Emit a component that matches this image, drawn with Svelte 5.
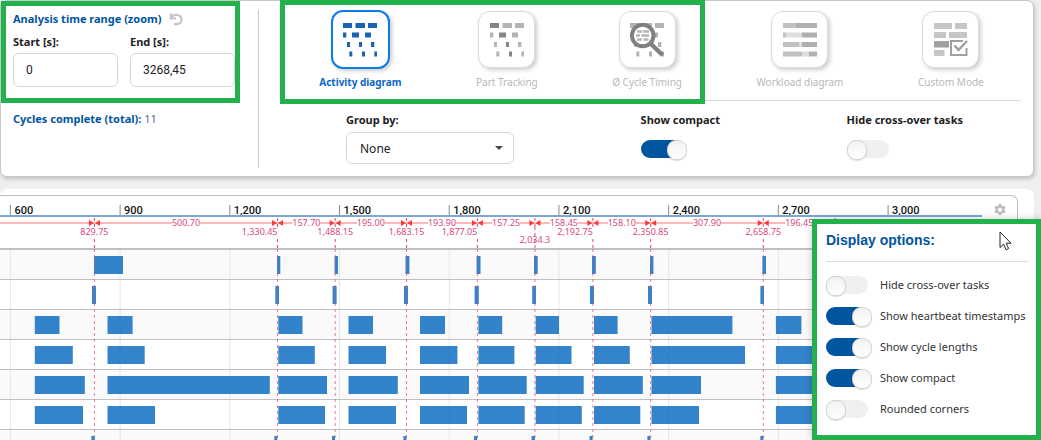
<script>
  let start = $state('0');
  let end = $state('3268,45');
  let mode = $state('activity');
  let compact = $state(true);
  let hideCross = $state(false);

  const modes = [
    { id: 'activity', label: 'Activity diagram' },
    { id: 'parts', label: 'Part Tracking' },
    { id: 'timing', label: 'Ø Cycle Timing' },
    { id: 'workload', label: 'Workload diagram' },
    { id: 'custom', label: 'Custom Mode' }
  ];

  // x, y, width of each dash in the activity icon
  const dashes = [
    [0, 0, 9], [12.5, 0, 9.5], [25, 0, 9],
    [0, 9.5, 3.3], [9, 9.5, 7], [22, 9.5, 6],
    [4, 19, 3], [16, 19, 3], [28, 19, 3.3],
    [6.3, 28.5, 3], [19, 28.5, 3], [31.3, 28.5, 2.7]
  ];
  const tracked = [0, 4, 7, 10];

  let options = $state([
    { label: 'Hide cross-over tasks', on: false },
    { label: 'Show heartbeat timestamps', on: true },
    { label: 'Show cycle lengths', on: true },
    { label: 'Show compact', on: true },
    { label: 'Rounded corners', on: false }
  ]);

  const toX = (t) => 10.4 + (t - 600) * 0.3657;
  const ticks = [600, 900, 1200, 1500, 1800, 2100, 2400, 2700, 3000];
  const beats = [
    { t: 829.75, text: '829.75', anchor: 'middle' },
    { t: 1330.45, text: '1,330.45', anchor: 'end' },
    { t: 1488.15, text: '1,488.15', anchor: 'middle' },
    { t: 1683.15, text: '1,683.15', anchor: 'middle' },
    { t: 1877.05, text: '1,877.05', anchor: 'end' },
    { t: 2034.3, text: '2,034.3', anchor: 'middle', low: true },
    { t: 2192.75, text: '2,192.75', anchor: 'end' },
    { t: 2350.85, text: '2,350.85', anchor: 'middle' },
    { t: 2658.75, text: '2,658.75', anchor: 'middle' },
    { t: 2855.2, text: '', anchor: 'middle' }
  ];
  const lengths = beats.slice(1).map((b, i) => ({
    x: (toX(b.t) + toX(beats[i].t)) / 2,
    text: (b.t - beats[i].t).toFixed(2)
  }));

  // start and end of every task, one list per station
  const rows = [
    [[94, 123], [277, 280.3], [334.6, 338], [405.5, 409.4], [476.6, 480.5], [534, 537.7], [592, 595.8], [650, 653.4], [762.4, 766]],
    [[92, 96], [275.3, 279], [332.6, 336.6], [404, 408], [474.6, 478.8], [532.2, 536], [590, 594], [648, 652], [760.4, 764]],
    [[34.8, 59.5], [107.5, 132.6], [278.3, 302.5], [348.5, 373], [420, 445], [478.4, 502.2], [535.7, 559], [594, 617.6], [651.5, 732.4], [775.9, 801.4]],
    [[34.8, 72.8], [107.5, 144.7], [278.3, 314.8], [348.5, 386], [420, 457.4], [478.4, 514.4], [535.7, 571.5], [594, 629.8], [651.5, 745], [775.9, 825]],
    [[34.8, 84.8], [107.5, 269.8], [278.3, 327], [348.5, 397.8], [420, 469], [478.4, 526.7], [535.7, 583.7], [594, 642.8], [651.5, 701], [775.9, 825]],
    [[34.8, 83], [107.5, 155], [278.3, 325], [348.5, 396], [420, 467], [478.4, 524.7], [535.7, 581.8], [594, 640.3], [651.5, 699], [775.9, 825]],
    [[91.4, 94.8], [274.3, 277.3], [332, 335], [403.4, 406.5], [474, 477.2], [531.6, 535], [589.5, 592.6], [647.4, 650.4], [760.4, 763.4]]
  ];
</script>

{#snippet dashIcon(kind)}
  {#each dashes as [x, y, w], i}
    <rect {x} {y} width={w} height="5"
      fill={kind === 'activity' ? '#1b64b4' : kind === 'parts' && tracked.includes(i) ? '#858585' : '#b3b3b3'} />
  {/each}
{/snippet}

<div class="page">
  <section class="panel settings">
    <div class="range">
      <h2>
        Analysis time range (zoom)
        <button class="undo" aria-label="Reset zoom">
          <svg width="14" height="13" viewBox="0 0 14 13">
            <path d="M1.8 0.5v5h5.2" fill="none" stroke="#c4c4c4" stroke-width="2.2" />
            <path d="M2.2 5C3 2.8 5 1.800 7.500 1.800C10.500 1.800 12.500 3.800 12.500 6.500C12.500 9.200 10.500 11.200 7.500 11.200H5" fill="none" stroke="#c4c4c4" stroke-width="2.2" />
          </svg>
        </button>
      </h2>
      <div class="fields">
        <label>Start [s]:<input type="text" bind:value={start} /></label>
        <label>End [s]:<input type="text" bind:value={end} /></label>
      </div>
      <p class="cycles"><b>Cycles complete (total):</b> 11</p>
      <span class="mark mark-range"></span>
    </div>

    <div class="view">
      <div class="modes">
        {#each modes as m}
          <button class="mode" class:active={mode === m.id} onclick={() => (mode = m.id)}>
            <span class="tile">
              <svg width="34" height="34" viewBox="0 0 34 34">
                {#if m.id === 'activity' || m.id === 'parts'}
                  {@render dashIcon(m.id)}
                {:else if m.id === 'timing'}
                  {@render dashIcon(m.id)}
                  <path d="M21 21L32.5 32" stroke="#808080" stroke-width="4.4" />
                  <circle cx="12.7" cy="12.5" r="10.8" fill="#fff" stroke="#808080" stroke-width="4" />
                  <path d="M7 8.500h5M13 8.500h6M6 12.500h4M11.500 12.500h7.500M7 16.500h5M13.500 16.500h5" stroke="#b5b5b5" stroke-width="2.500" />
                {:else if m.id === 'workload'}
                  <path d="M0 2.500h12.500M0 12h3M0 21.500h16M0 31h19" stroke="#c0c0c0" stroke-width="5" />
                  <path d="M3 12h16M16 21.500h3M19 31h7" stroke="#dedede" stroke-width="5" />
                  <path d="M12.500 2.500H34M19 12h15M19 21.500h15M26 31h8" stroke="#b0b0b0" stroke-width="5" />
                {:else}
                  <path d="M0 3h18M21 3h12M0 12h12M15 12h18M0 30h10.500" stroke="#c6c6c6" stroke-width="6" />
                  <path d="M0 21.300h15" stroke="#a0a0a0" stroke-width="6.500" />
                  <path d="M29 18H17v14h15.500V25" fill="#fff" stroke="#a0a0a0" stroke-width="2" />
                  <path d="M20.500 22.500l4 4.500L33 18" fill="none" stroke="#fff" stroke-width="5" />
                  <path d="M20.500 22.500l4 4.500L33 18" fill="none" stroke="#a0a0a0" stroke-width="2.500" />
                {/if}
              </svg>
            </span>
            <span>{m.label}</span>
          </button>
        {/each}
        <span class="mark mark-modes"></span>
      </div>
      <div class="controls">
        <label class="group">
          Group by:
          <span class="select">
            <select><option>None</option></select>
            <svg width="8" height="4" viewBox="0 0 8 4"><path d="M0 0h8L4 4z" fill="#444" /></svg>
          </span>
        </label>
        <label>Show compact<input class="switch" type="checkbox" bind:checked={compact} /></label>
        <label>Hide cross-over tasks<input class="switch" type="checkbox" bind:checked={hideCross} /></label>
      </div>
    </div>
  </section>

  <section class="panel timeline">
    <div class="chart">
      <svg class="plot" width="100%" height="274">
        {#each rows as bars, r}
          {#if r % 2 === 0}<rect x="0" y={54 + r * 30} width="100%" height="30" fill="#fafafa" />{/if}
        {/each}
        {#each ticks as t}
          <line x1={toX(t)} x2={toX(t)} y1="54" y2="274" stroke="#e6e6e6" />
          <line x1={toX(t)} x2={toX(t)} y1="9" y2="20" stroke="#8a8a8a" />
          <text class="tick" x={toX(t) + 4} y="18">{t.toLocaleString('en-US')}</text>
        {/each}
        <rect x="0" y="19" width="982" height="2" fill="#7ca6d6" />
        <rect x="0" y="26" width="982" height="2" fill="#ffb9b9" />
        <rect x="0" y="52" width="100%" height="2" fill="#c0c0c0" />
        {#each rows as bars, r}
          <rect x="0" y={83 + r * 30} width="100%" height="1" fill="#c0c0c0" />
        {/each}
        {#each lengths as l}
          <rect x={l.x - 14} y="23" width="28" height="8" fill="#fff" />
          <text class="note" x={l.x} y="30" text-anchor="middle">{l.text}</text>
        {/each}
        {#each rows as bars, r}
          {#each bars as [a, b]}
            <rect x={a} y={60 + r * 30} width={b - a} height="18" fill="#0065bd" fill-opacity="0.8" />
          {/each}
        {/each}
        {#each beats as b}
          <path d="M{toX(b.t)} 22V31M{toX(b.t)} {b.low ? 31 : 43}V53" stroke="#d9487c" stroke-dasharray="3 3" />
          <path d="M{toX(b.t)} 53V274" stroke="#e0527f" stroke-opacity="0.75" stroke-dasharray="3 3" />
          <path d="M{toX(b.t) - 5.5} 24l5 3-5 3zM{toX(b.t) + 5.5} 24l-5 3 5 3z" fill="#ff3838" />
          <text class="note" x={toX(b.t)} y={b.low ? 47 : 39} text-anchor={b.anchor}>{b.text}</text>
        {/each}
      </svg>
      <button class="gear" aria-label="Display options">
        <svg width="12" height="12" viewBox="0 0 12 12">
          <path fill="#bdbdbd" fill-rule="evenodd" d="M4.700 0h2.600l.3 1.700 1 .6 1.700-.7 1.300 2.200-1.300 1.100v1.200l1.300 1.100-1.300 2.200-1.700-.7-1 .6-.3 1.700H4.700l-.3-1.700-1-.6-1.700.7L.4 7.200l1.300-1.100V4.900L.4 3.800l1.300-2.200 1.700.7 1-.6zM6 3.700a2 2 0 1 0 0 4a2 2 0 1 0 0-4z" />
        </svg>
      </button>
    </div>
  </section>

  <aside class="popover">
    <h3>Display options:</h3>
    {#each options as o}
      <label><input class="switch" type="checkbox" bind:checked={o.on} />{o.label}</label>
    {/each}
    <svg class="pointer" width="13" height="20" viewBox="0 0 13 20">
      <path d="M1 1v15.500l3.600-3.400 2.500 5.600 2.500-1.100-2.400-5.400H12z" fill="#fff" stroke="#222" />
    </svg>
  </aside>
</div>

<style>
  :global(body) {
    margin: 0;
    background: #efefef;
    color: #222;
    font: 11px/16px 'Noto Sans', 'Open Sans', sans-serif;
  }
  .page {
    position: relative;
    height: 100vh;
    overflow: hidden;
  }
  .page, .page * { box-sizing: border-box; }
  button {
    padding: 0;
    border: 0;
    background: none;
    font: inherit;
  }
  .panel {
    margin-right: 7px;
    background: #fff;
    border-radius: 7px;
  }
  .settings {
    position: relative;
    display: flex;
    padding: 9px 12px 8px 12px;
    border: 1px solid #c8c8c8;
    box-shadow: 1px 2px 4px #0003;
  }
  .range {
    width: 246px;
    border-right: 1px solid #c8c8c8;
  }
  h2 {
    display: flex;
    align-items: center;
    gap: 7px;
    margin: 0;
    color: #00559f;
    font-size: 11px;
    line-height: 18px;
  }
  .undo { display: flex; }
  .fields {
    display: flex;
    gap: 12px;
    margin-top: 6px;
  }
  .fields label, .controls label {
    display: flex;
    flex-direction: column;
    font-weight: bold;
  }
  .fields input {
    width: 105px;
    height: 34px;
    margin-top: 3px;
    padding: 0 12px;
    border: 1px solid #d6d6d6;
    border-radius: 6px;
    color: #222;
    font: 12px Roboto, sans-serif;
  }
  .cycles {
    margin: 24px 0 0;
    color: #4b6c9a;
  }
  .cycles b { color: #00559f; }
  .view {
    flex: 1;
    margin-left: 23px;
  }
  .modes {
    display: flex;
    justify-content: space-around;
    height: 91px;
    border-bottom: 1px solid #dcdcdc;
  }
  .mode {
    display: flex;
    flex-direction: column;
    align-items: center;
    gap: 5px;
    align-self: flex-start;
    color: #b8b8b8;
    font-size: 10px;
    line-height: 16px;
  }
  .tile {
    display: flex;
    align-items: center;
    justify-content: center;
    width: 57px;
    height: 57px;
    margin: 1px;
    border: 1px solid #dcdcdc;
    border-radius: 12px;
    background: #fff;
    box-shadow: 2px 2px 4px #0003;
  }
  .active {
    color: #0b66c8;
    font-weight: bold;
  }
  .active .tile {
    width: 59px;
    height: 59px;
    margin: 0;
    border: 2px solid #0a7be8;
  }
  .controls {
    display: flex;
    justify-content: space-between;
    padding: 11px 58px 4px 64px;
  }
  .group { width: 168px; }
  .select {
    display: flex;
    align-items: center;
    margin-top: 4px;
  }
  select {
    appearance: none;
    width: 100%;
    height: 32px;
    padding: 0 13px;
    border: 1px solid #d6d6d6;
    border-radius: 6px;
    background: #fff;
    color: #222;
    font: 12px 'Noto Sans', sans-serif;
  }
  .select svg {
    margin-left: -19px;
    pointer-events: none;
  }
  .switch {
    appearance: none;
    flex: none;
    width: 42px;
    height: 18px;
    margin: 0;
    border-radius: 9px;
    background: #f0f0f0;
  }
  .switch::before {
    content: '';
    display: block;
    width: 18px;
    height: 18px;
    border: 1px solid #d2d2d2;
    border-radius: 9px;
    background: linear-gradient(#f2f2f2, #fff);
    box-shadow: 0 1px 1px #0002;
  }
  .switch:checked { background: #00559f; }
  .switch:checked::before { margin-left: 26px; }
  .controls .switch { margin-top: 12px; }

  .timeline {
    margin-top: 12px;
    padding: 6px 16px 0 0;
  }
  .chart {
    position: relative;
    border: 1px solid #c0c0c0;
    border-width: 1px 1px 0 0;
    border-top-right-radius: 7px;
  }
  .plot { display: block; }
  .tick {
    fill: #111;
    font: 500 11px Roboto, sans-serif;
  }
  .note {
    fill: #d9487c;
    font: 9px 'Noto Sans', sans-serif;
  }
  .gear {
    position: absolute;
    top: 8px;
    right: 11px;
    display: flex;
  }
  .popover {
    position: absolute;
    right: 0;
    bottom: 0;
    width: 229px;
    height: 221px;
    padding: 6px 8px 0 9px;
    border: 5px solid #22b14c;
    background: #fff;
    box-shadow: 0 0 8px #0003;
    color: #333;
    font-size: 11px;
  }
  h3 {
    margin: 0 0 7px;
    padding-bottom: 11px;
    border-bottom: 1px solid #dcdcdc;
    color: #00559f;
    font: bold 14px/20px 'Liberation Sans', sans-serif;
  }
  .popover label {
    display: flex;
    align-items: center;
    gap: 12px;
    height: 31px;
    white-space: nowrap;
  }
  .pointer {
    position: absolute;
    top: 7px;
    right: 24px;
  }
  .mark {
    position: absolute;
    border: 5px solid #22b14c;
    pointer-events: none;
  }
  .mark-range {
    top: 0;
    left: 0;
    width: 239px;
    height: 102px;
  }
  .mark-modes {
    top: -1px;
    left: 279px;
    width: 425px;
    height: 104px;
  }
</style>
